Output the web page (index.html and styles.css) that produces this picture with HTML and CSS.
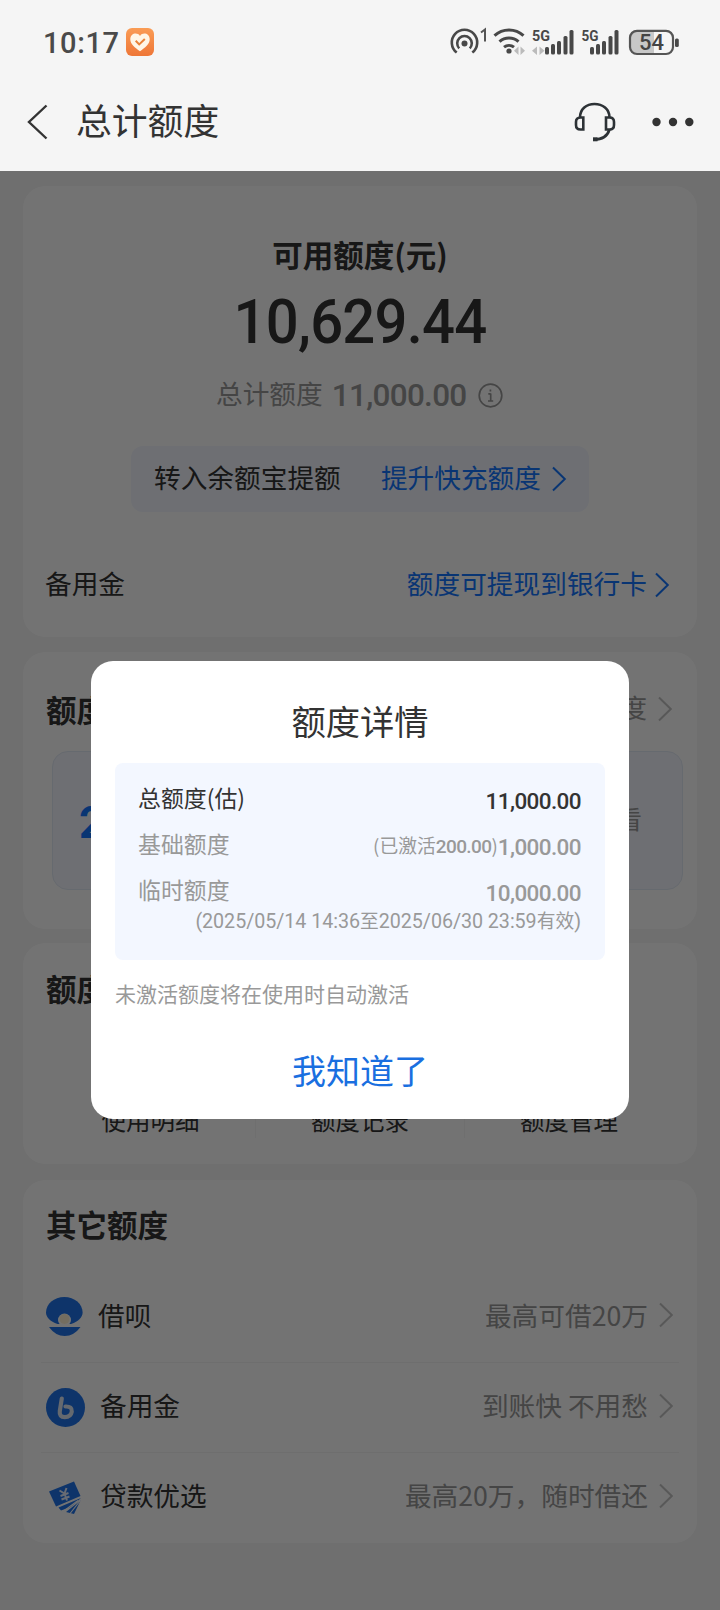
FILE: index.html
```html
<!DOCTYPE html>
<html lang="zh-CN">
<head>
<meta charset="utf-8">
<title>总计额度</title>
<link rel="stylesheet" href="styles.css">
</head>
<body>
<svg class="defs" aria-hidden="true">
  <symbol id="chev" viewBox="0 0 16 26"><path d="M2 1.500 13.800 13 2 24.500" fill="none" stroke="currentColor" stroke-width="2"/></symbol>
</svg>
<div class="app">
  <header class="top">
    <div class="status">
      <span class="clock num">10:17</span>
      <svg class="badge" viewBox="0 0 28 28"><defs><linearGradient id="og" x1="0" y1="0" x2="0" y2="1"><stop offset="0" stop-color="#fa9c55"/><stop offset="1" stop-color="#ee7637"/></linearGradient></defs><rect width="28" height="28" rx="6" fill="url(#og)"/><path d="M14 23.200C9 20 4.300 16 4.300 11.300c0-6 7-7.500 9.700-3.300 2.700-4.200 9.700-2.700 9.700 3.300C23.700 16 19 20 14 23.200z" fill="#fff6e6"/><path d="M9.700 12.800l3.500 3.600 5.600-5.300" fill="none" stroke="#e98238" stroke-width="2"/></svg>
      <svg class="sysicons" viewBox="0 0 232 32">
        <g fill="none" stroke="#484848" stroke-width="2.600">
          <path d="M6.700 26.500A12.700 12.700 0 1 1 22.300 26.500"/>
          <path d="M9.200 22.300A7.300 7.300 0 1 1 19.800 22.300"/>
        </g>
        <circle cx="14.500" cy="17.500" r="3" fill="#484848"/>
        <path d="M31 6.500l4-3v12" fill="none" stroke="#555" stroke-width="2"/>
        <g fill="none" stroke="#484848" stroke-width="3">
          <path d="M44.500 9.700a21 21 0 0 1 29 0"/><path d="M49.500 15.700a14 14 0 0 1 19 0"/><path d="M54 21.200a8 8 0 0 1 10 0"/>
        </g>
        <circle cx="59" cy="25" r="2.600" fill="#484848"/>
        <g fill="#bbb"><path d="M68.500 20.500v8.500l-4.500-4.200zM70.500 20.500v8.500l4.500-4.200zM87 20.500v8.500l-5-4.200zM89.500 20.500v8.500l5-4.200z"/></g>
        <text x="82" y="14.800" class="g5" textLength="18" lengthAdjust="spacingAndGlyphs">5G</text>
        <g fill="#484848"><rect x="95" y="21" width="4" height="7.500" rx="1.500"/><rect x="101" y="18" width="4" height="10.500" rx="1.500"/><rect x="107" y="15" width="4" height="13.500" rx="1.500"/><rect x="113.500" y="10" width="4" height="18.500" rx="1.500"/><rect x="119.500" y="4" width="4" height="24.500" rx="1.500"/>
        <rect x="140" y="21" width="4" height="7.500" rx="1.500"/><rect x="146" y="18" width="4" height="10.500" rx="1.500"/><rect x="152" y="15" width="4" height="13.500" rx="1.500"/><rect x="158.500" y="10" width="4" height="18.500" rx="1.500"/><rect x="164.500" y="4" width="4" height="24.500" rx="1.500"/></g>
        <text x="131.500" y="14.800" class="g5" textLength="17" lengthAdjust="spacingAndGlyphs">5G</text>
        <path d="M204 5h-18q-6 0-6 6v10q0 6 6 6h18z" fill="#c8c8c8"/>
        <rect x="180" y="4.800" width="43" height="23.200" rx="7" fill="none" stroke="#555" stroke-width="2.200"/>
        <rect x="225" y="12.500" width="3.800" height="8.500" rx="1.500" fill="#484848"/>
        <text x="201.500" y="24" class="pct" text-anchor="middle">54</text>
      </svg>
    </div>
    <div class="nav">
      <svg class="back" viewBox="0 0 22 36"><path d="M19.500 1.500 2 18 19.500 34.500" fill="none" stroke="#333" stroke-width="2.400"/></svg>
      <h1>总计额度</h1>
      <svg class="headset" viewBox="0 0 42 40" fill="none" stroke="#2d3236" stroke-width="2.600"><path d="M6 15.500C6 7 12.500 2 20.500 2S35.500 7 35.500 15.500"/><path d="M9.300 15.500H6.500Q2 15.500 2 20v3Q2 27.500 6.500 27.500H9.300zM32 15.500h3.500Q40 15.500 40 20v3Q40 27.500 35.500 27.500H32z"/><path d="M35.500 27.500C33.500 34 28 37.500 20 37.500"/><path d="M19 37.300h4.500" stroke-width="4"/></svg>
      <svg class="more" viewBox="0 0 42 10"><circle cx="4.500" cy="5" r="4.200"/><circle cx="21" cy="5" r="4.200"/><circle cx="37.300" cy="5" r="4.200"/></svg>
    </div>
  </header>

  <main class="page">
    <section class="card total">
      <h2 class="total-title">可用额度(元)</h2>
      <div class="amount num">10,629.44</div>
      <div class="sum"><span>总计额度</span><b class="num">11,000.00</b>
        <svg class="info" viewBox="0 0 25 25"><circle cx="12.500" cy="12.500" r="11.300"/><path d="M12.700 10.500v7.500M10.300 10.800h2.400M10 18h5.200M12.400 6.500v2"/></svg>
      </div>
      <div class="pill"><span>转入余额宝提额</span><a>提升快充额度<svg class="chev"><use href="#chev"/></svg></a></div>
      <div class="reserve"><span>备用金</span><a>额度可提现到银行卡<svg class="chev"><use href="#chev"/></svg></a></div>
    </section>

    <section class="card boost">
      <div class="head"><h2>额度</h2><a class="link">额度<svg class="chev"><use href="#chev"/></svg></a></div>
      <div class="promo"><b class="num">2</b><span>查看</span></div>
    </section>

    <section class="card tools">
      <h2>额度</h2>
      <div class="tool-row"><span>使用明细</span><span>额度记录</span><span>额度管理</span></div>
    </section>

    <section class="card others">
      <h2>其它额度</h2>
      <div class="row">
        <svg class="ico" viewBox="0 0 40 40"><path d="M11.500 27C4 24.500 0 20 0 15.500 0 7 8 0 18.300 0s18.300 7 18.300 15.500c0 4.500-4 9-11.500 11.500z" fill="#1f74ec"/><circle cx="18.500" cy="23" r="6.500" fill="#fff"/><circle cx="18.500" cy="22" r="5" fill="#fff2d5"/><path d="M0 27h37v3H0z" fill="#fff"/><path d="M3 30h31.500Q28 39 18.700 39T3 30z" fill="#1f74ec"/></svg>
        <span class="name first">借呗</span><span class="desc">最高可借20万</span><svg class="chev"><use href="#chev"/></svg>
      </div>
      <div class="row">
        <svg class="ico" viewBox="0 0 40 40"><circle cx="19.500" cy="19.500" r="19.500" fill="#1f74ec"/><path d="M15.800 10.500l-2 12.500q-.8 6.200 5 6.200 6 0 7-5.500.5-5.500-6.300-5.200" fill="none" stroke="#dfe8f5" stroke-width="4.200" stroke-linecap="round"/></svg>
        <span class="name">备用金</span><span class="desc">到账快 不用愁</span><svg class="chev"><use href="#chev"/></svg>
      </div>
      <div class="row">
        <svg class="ico" viewBox="0 0 40 40"><path d="M3 13.500 28 3.500 34.500 18 10 28.500z" fill="#1f74ec"/><path d="M12.500 29.500 35 20 24.500 29 15 32.500zM20 34l14.500-11.500L28 36z" fill="#1f74ec"/><path d="M13.500 12.500l5 3 2-5.500M18.500 15.500l2.500 7M14.500 18l8-3M15.500 21.500l8-3" fill="none" stroke="#e8f0ff" stroke-width="2"/><path d="M17 33.500 32 22.500M24 35.500 34 23" stroke="#fff" stroke-width="1.200"/></svg>
        <span class="name">贷款优选</span><span class="desc">最高20万，随时借还</span><svg class="chev"><use href="#chev"/></svg>
      </div>
    </section>
  </main>

  <div class="mask"></div>
  <div class="dialog" role="dialog">
    <h2>额度详情</h2>
    <div class="detail">
      <div class="item strong"><span>总额度(估)</span><b class="num">11,000.00</b></div>
      <div class="item"><span>基础额度</span><span class="val"><small>(已激活<b class="num">200.00</b>)</small><b class="num">1,000.00</b></span></div>
      <div class="item"><span>临时额度</span><b class="num">10,000.00</b></div>
      <div class="period"><i>(2025/05/14 14:36</i>至<i>2025/06/30 23:59</i>有效<i>)</i></div>
    </div>
    <p>未激活额度将在使用时自动激活</p>
    <button>我知道了</button>
  </div>
</div>
</body>
</html>
```
FILE: styles.css
```css
* { box-sizing: border-box; margin: 0; padding: 0; }
body { font-family: "Noto Sans CJK SC", sans-serif; color: #333; background: #f5f5f5; }
.defs { position: absolute; width: 0; height: 0; }
svg { display: block; flex: none; }
.num { font-family: Roboto, "Liberation Sans", sans-serif; }
.app { position: relative; width: 720px; height: 1610px; overflow: hidden; display: flex; flex-direction: column; }

/* header */
.top { position: relative; z-index: 2; height: 171px; background: #f5f5f5; flex: none; }
.status { display: flex; align-items: center; height: 84px; padding: 0 38px 0 43px; }
.clock { font-size: 29px; font-weight: 500; letter-spacing: .6px; color: #4a4a4a; width: 83px; white-space: nowrap; margin-top: 2px; }
.badge { width: 28px; height: 28px; margin-top: -1px; }
.sysicons { width: 232px; height: 32px; margin: 0 0 0 auto; }
.g5 { font: 700 15.5px Roboto, sans-serif; fill: #484848; }
.pct { font: 500 22px Roboto, sans-serif; fill: #444; }
.nav { display: flex; align-items: center; height: 76px; padding: 0 26px 0 27px; }
.back { width: 22px; height: 36px; }
.nav h1 { font-size: 35.800px; line-height: 50px; font-weight: 400; margin-left: 27px; margin-top: -6px; }
.headset { width: 42px; height: 40px; margin-left: auto; }
.more { width: 42px; height: 10px; margin-left: 36px; fill: #333; }

/* page */
.page { flex: 1; padding: 15px 23px 0; display: flex; flex-direction: column; }
.card { background: #fff; border-radius: 22px; flex: none; }
.card h2 { font-size: 30.5px; line-height: 44px; font-weight: 700; }
.chev { width: 16px; height: 26px; }
.total { height: 451px; margin-bottom: 15px; text-align: center; padding-top: 46px; }
.amount { font-size: 61px; font-weight: 500; line-height: 70px; letter-spacing: -.8px; margin-top: 11px; transform: scaleX(.95); }
.sum { display: flex; align-items: center; height: 44px; margin-top: 16px; padding-left: 193px; font-size: 26.7px; color: #999; }
.sum span { line-height: 40px; margin-top: -4px; }
.sum b { font-size: 31.5px; font-weight: 500; letter-spacing: -.7px; margin-left: 9px; }
.info { width: 25px; height: 25px; margin-left: 11px; fill: none; stroke: #999; stroke-width: 1.7; }
.pill { width: 458px; height: 66px; margin: 29px 0 0 108px; background: #f3f7ff; border-radius: 12px; display: flex; align-items: center; justify-content: space-between; padding: 0 22px 4px 23px; font-size: 26.7px; line-height: 40px; }
.total a { display: flex; align-items: center; color: #1677ff; }
.total a .chev { margin-left: 10px; margin-top: 3px; }
.reserve { display: flex; justify-content: space-between; font-size: 26.7px; line-height: 40px; padding: 0 27px 0 22px; margin-top: 51px; }
.reserve a .chev { margin-left: 7px; }
.boost { height: 277px; margin-bottom: 14px; padding: 35px 14px 0 29px; }
.head { display: flex; justify-content: space-between; padding: 0 10px 0 0; margin-left: -6px; }
.link { display: flex; align-items: center; font-size: 26px; line-height: 40px; height: 40px; color: #999; }
.link .chev { color: #c4c4c4; margin-left: 10px; margin-top: 3px; }
.promo { height: 139px; margin-top: 20px; border-radius: 16px; border: 1px solid #e3eaf6; background: #f3f7fe; display: flex; align-items: center; justify-content: space-between; padding: 0 40px 0 26px; color: #999; font-size: 25px; }
.promo b { font-size: 45px; font-weight: 700; color: #1677ff; margin-top: 4px; }
.promo span { margin-top: -5px; }
.tools { height: 221px; margin-bottom: 16px; padding-top: 23px; }
.tools h2 { padding-left: 23px; }
.tool-row { display: grid; grid-template-columns: repeat(3, 209px); margin: 92px 0 0 23px; text-align: center; font-size: 24.500px; line-height: 36px; }
.tool-row span + span { border-left: 1px solid #f5f5f5; }
.others { height: 363px; padding: 22px 18px 0; }
.others h2 { padding-left: 5px; margin-bottom: 26px; }
.row { display: flex; align-items: center; height: 90px; padding: 0 5px; font-size: 26.7px; line-height: 40px; }
.row + .row { border-top: 1px solid #f4f4f4; }
.ico { width: 40px; height: 40px; }
.name { margin: -5px 0 0 14px; }
.name.first { margin-left: 12px; }
.desc { margin: -5px 0 0 auto; color: #999; }
.row .chev { color: #c4c4c4; margin-left: 10px; margin-top: -4px; }

/* dialog */
.mask { position: absolute; inset: 0; background: rgba(0,0,0,.55); }
.dialog { position: absolute; z-index: 3; left: 91px; top: 661px; width: 538px; height: 458px; border-radius: 22px; background: #fff; padding: 34px 24px 0; display: flex; flex-direction: column; }
.dialog h2 { font-size: 34.300px; line-height: 50px; font-weight: 400; text-align: center; }
.detail { height: 197px; margin-top: 18px; background: #f3f7ff; border-radius: 8px; padding: 13px 24px 0 23px; color: #999; }
.item { display: flex; justify-content: space-between; align-items: center; height: 46px; font-size: 22.900px; line-height: 34px; }
.item > span:first-child { margin-top: -4px; }
.item b { font-size: 22.500px; font-weight: 500; letter-spacing: -.6px; margin-top: 4px; }
.item.strong { color: #333; }
.val { display: flex; align-items: center; padding-top: 2px; }
.val small { font-size: 18.800px; }
.val small b { font-size: 19px; }
.val > b { margin-top: 2px; }
.period { font-size: 18.800px; line-height: 26px; text-align: right; margin-top: -7px; white-space: nowrap; }
.period i { font: 400 19.700px Roboto, sans-serif; letter-spacing: -.05px; }
.dialog p { font-size: 21px; line-height: 32px; color: #999; margin-top: 17px; }
.dialog button { border: 0; background: none; font: 400 34px/50px "Noto Sans CJK SC", sans-serif; color: #1a6fe0; margin-top: 36px; }
```
